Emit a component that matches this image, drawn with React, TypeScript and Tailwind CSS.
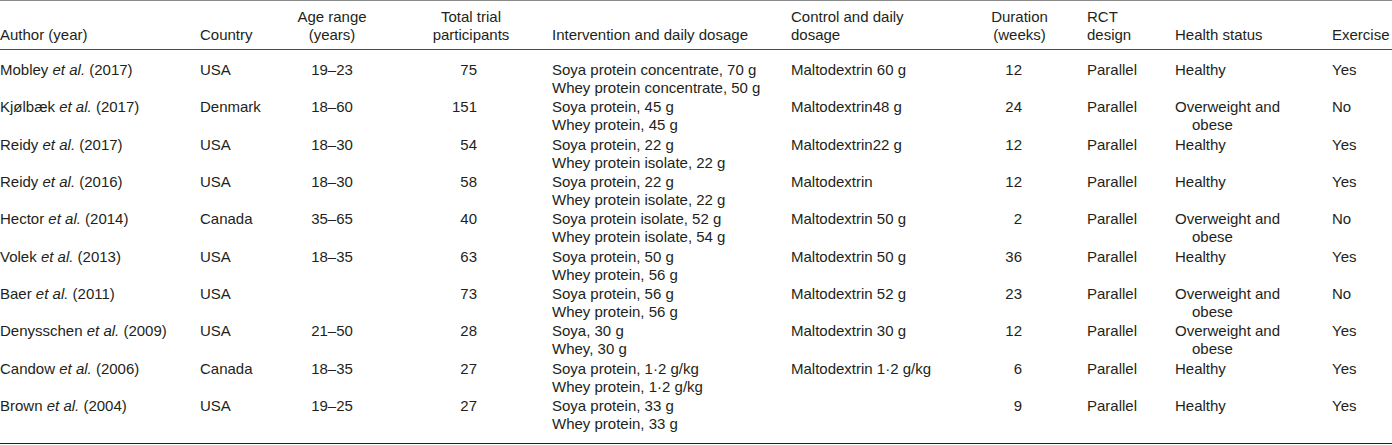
import type { FC } from "react";
import React from "react";

type Studie = {
  autor: string;
  jahr: string;
  land: string;
  alter: string;
  teilnehmer: string;
  intervention: string[];
  kontrolle: string;
  dauer: string;
  gesundheit: string[];
  sport: string;
};

const Studien: Studie[] = [
  {
    autor: "Mobley",
    jahr: "2017",
    land: "USA",
    alter: "19–23",
    teilnehmer: "75",
    intervention: ["Soya protein concentrate, 70 g", "Whey protein concentrate, 50 g"],
    kontrolle: "Maltodextrin 60 g",
    dauer: "12",
    gesundheit: ["Healthy"],
    sport: "Yes",
  },
  {
    autor: "Kjølbæk",
    jahr: "2017",
    land: "Denmark",
    alter: "18–60",
    teilnehmer: "151",
    intervention: ["Soya protein, 45 g", "Whey protein, 45 g"],
    kontrolle: "Maltodextrin48 g",
    dauer: "24",
    gesundheit: ["Overweight and", "obese"],
    sport: "No",
  },
  {
    autor: "Reidy",
    jahr: "2017",
    land: "USA",
    alter: "18–30",
    teilnehmer: "54",
    intervention: ["Soya protein, 22 g", "Whey protein isolate, 22 g"],
    kontrolle: "Maltodextrin22 g",
    dauer: "12",
    gesundheit: ["Healthy"],
    sport: "Yes",
  },
  {
    autor: "Reidy",
    jahr: "2016",
    land: "USA",
    alter: "18–30",
    teilnehmer: "58",
    intervention: ["Soya protein, 22 g", "Whey protein isolate, 22 g"],
    kontrolle: "Maltodextrin",
    dauer: "12",
    gesundheit: ["Healthy"],
    sport: "Yes",
  },
  {
    autor: "Hector",
    jahr: "2014",
    land: "Canada",
    alter: "35–65",
    teilnehmer: "40",
    intervention: ["Soya protein isolate, 52 g", "Whey protein isolate, 54 g"],
    kontrolle: "Maltodextrin 50 g",
    dauer: "2",
    gesundheit: ["Overweight and", "obese"],
    sport: "No",
  },
  {
    autor: "Volek",
    jahr: "2013",
    land: "USA",
    alter: "18–35",
    teilnehmer: "63",
    intervention: ["Soya protein, 50 g", "Whey protein, 56 g"],
    kontrolle: "Maltodextrin 50 g",
    dauer: "36",
    gesundheit: ["Healthy"],
    sport: "Yes",
  },
  {
    autor: "Baer",
    jahr: "2011",
    land: "USA",
    alter: "",
    teilnehmer: "73",
    intervention: ["Soya protein, 56 g", "Whey protein, 56 g"],
    kontrolle: "Maltodextrin 52 g",
    dauer: "23",
    gesundheit: ["Overweight and", "obese"],
    sport: "No",
  },
  {
    autor: "Denysschen",
    jahr: "2009",
    land: "USA",
    alter: "21–50",
    teilnehmer: "28",
    intervention: ["Soya, 30 g", "Whey, 30 g"],
    kontrolle: "Maltodextrin 30 g",
    dauer: "12",
    gesundheit: ["Overweight and", "obese"],
    sport: "Yes",
  },
  {
    autor: "Candow",
    jahr: "2006",
    land: "Canada",
    alter: "18–35",
    teilnehmer: "27",
    intervention: ["Soya protein, 1·2 g/kg", "Whey protein, 1·2 g/kg"],
    kontrolle: "Maltodextrin 1·2 g/kg",
    dauer: "6",
    gesundheit: ["Healthy"],
    sport: "Yes",
  },
  {
    autor: "Brown",
    jahr: "2004",
    land: "USA",
    alter: "19–25",
    teilnehmer: "27",
    intervention: ["Soya protein, 33 g", "Whey protein, 33 g"],
    kontrolle: "",
    dauer: "9",
    gesundheit: ["Healthy"],
    sport: "Yes",
  },
];

// spaltenbreiten aus dem original abgemessen
const spalten =
  "grid grid-cols-[200px_82px_148px_122px_239px_189px_107px_88px_157px_1fr]";

const StudienTabelle: FC = () => {
  return (
    <div
      className="h-[445px] w-[1392px] overflow-hidden bg-white text-[15px] leading-[18px] text-[#231f20]"
      style={{ fontFamily: '"Liberation Sans", Arial, sans-serif' }}
    >
      <div className={`${spalten} items-end border-t border-b border-t-[#8a8a8a] border-b-[#4a4a4a] pt-[7px] pb-[5px]`}>
        <div>Author (year)</div>
        <div>Country</div>
        <div className="pr-[48px] text-center">
          Age range
          <br />
          (years)
        </div>
        <div className="pr-[40px] text-center">
          Total trial
          <br />
          participants
        </div>
        <div>Intervention and daily dosage</div>
        <div>
          Control and daily
          <br />
          dosage
        </div>
        <div className="pr-[28px] text-center">
          Duration
          <br />
          (weeks)
        </div>
        <div>
          RCT
          <br />
          design
        </div>
        <div>Health status</div>
        <div className="whitespace-nowrap">Exercise</div>
      </div>

      <div className="border-b border-b-[#231f20] pt-[11px] pb-[8.7px]">
        {Studien.map((s, i) => (
          <div key={i} className={`${spalten} h-[37.33px] items-start`}>
            <div className="whitespace-nowrap">
              {s.autor} <i>et al.</i> ({s.jahr})
            </div>
            <div>{s.land}</div>
            <div className="pr-[48px] text-center">{s.alter}</div>
            <div className="pr-[75px] text-right">{s.teilnehmer}</div>
            <div className="whitespace-nowrap">
              {s.intervention.map((z) => (
                <div key={z}>{z}</div>
              ))}
            </div>
            <div className="whitespace-nowrap">{s.kontrolle}</div>
            <div className="pr-[65px] text-right">{s.dauer}</div>
            <div>Parallel</div>
            <div className="whitespace-nowrap">
              {s.gesundheit.map((z, j) => (
                <div key={z} className={j > 0 ? "pl-[17px]" : ""}>
                  {z}
                </div>
              ))}
            </div>
            <div>{s.sport}</div>
          </div>
        ))}
      </div>
    </div>
  );
};

export default function App() {
  return <StudienTabelle />;
}
